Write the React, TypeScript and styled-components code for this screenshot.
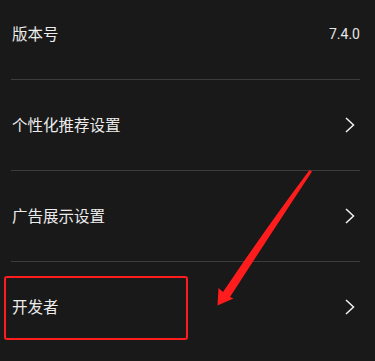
import React from "react";
import styled, { createGlobalStyle } from "styled-components";

const Global = createGlobalStyle`
  html, body { margin: 0; padding: 0; background: #191919; }
  body { width: 375px; height: 361px; overflow: hidden; }
`;

const Page = styled.div`
  position: relative;
  width: 375px;
  height: 361px;
  overflow: hidden;
  background: #191919;
  font-family: "Noto Sans CJK SC", "Noto Sans", sans-serif;
`;

const List = styled.div`
  display: flex;
  flex-direction: column;
  margin-top: -11px;
`;

const Row = styled.div`
  height: 90px;
  display: flex;
  align-items: center;
  justify-content: space-between;
  padding: 0 20px 0 12px;
  box-sizing: border-box;
`;

const Label = styled.span`
  color: #ececec;
  font-size: 15.5px;
  line-height: 1;
`;

const Value = styled.span`
  color: #e6e6e6;
  font-family: "Roboto", "Noto Sans", sans-serif;
  font-size: 14px;
  margin-right: -5px;
`;

const Divider = styled.div`
  height: 1px;
  margin: 0 15px 0 11px;
  background: #3c3c3c;
`;

const Chevron = () => (
  <svg width="10" height="16" viewBox="0 0 10 16">
    <path d="M1 1 L8.5 8 L1 15" fill="none" stroke="#f2f2f2" strokeWidth="1.5" />
  </svg>
);

const Highlight = styled.div`
  position: absolute;
  left: 4px;
  top: 276px;
  width: 184px;
  height: 64px;
  box-sizing: border-box;
  border: 2px solid #ff1c1c;
  border-radius: 3px;
`;

const ArrowLayer = styled.svg`
  position: absolute;
  left: 0;
  top: 0;
  pointer-events: none;
`;

const items: { label: string; value?: string }[] = [
  { label: "版本号", value: "7.4.0" },
  { label: "个性化推荐设置" },
  { label: "广告展示设置" },
  { label: "开发者" },
];

export default function App() {
  return (
    <Page>
      <Global />
      <List>
        {items.map((it, i) => (
          <React.Fragment key={it.label}>
            {i > 0 && <Divider />}
            <Row>
              <Label>{it.label}</Label>
              {it.value ? <Value>{it.value}</Value> : <Chevron />}
            </Row>
          </React.Fragment>
        ))}
      </List>
      <Highlight />
      <ArrowLayer width="375" height="361" viewBox="0 0 375 361">
        <path
          d="M309.5 170 L312 171.5 Q272 232 230 297 L233.5 298.5 L217.5 305.5 L218.5 288 L223 292 Q266 228 309.5 170 Z"
          fill="#ff1c1c"
        />
      </ArrowLayer>
    </Page>
  );
}
